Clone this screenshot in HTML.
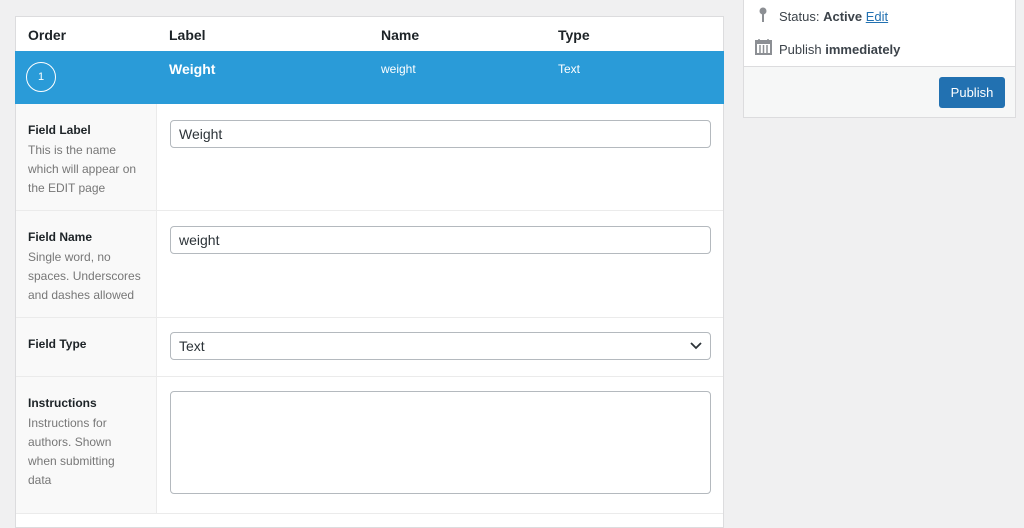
<!DOCTYPE html>
<html><head><style>
body{margin:0;width:1024px;height:515px;background:#f0f0f1;font-family:"Liberation Sans",sans-serif;font-size:13px;color:#1d2327;position:relative;overflow:hidden}
.box{position:absolute;left:15px;top:16px;width:707px;height:510px;background:#fff;border:1px solid #dcdcde}
.hd{position:absolute;top:0;left:0;right:0;height:35px;font-weight:bold;font-size:14px}
.hd span,.blue span{position:absolute}
.blue{position:absolute;top:34px;left:-1px;right:-1px;height:53px;background:#2a9bd8;color:#fff}
.circ{position:absolute;left:11px;top:11px;width:28px;height:28px;border:1.5px solid #fff;border-radius:50%;text-align:center;line-height:28px;font-size:11px}
.row{position:absolute;left:0;right:0;border-bottom:1px solid #ebebeb}
.lab{position:absolute;left:0;top:0;bottom:0;width:141px;background:#f9f9f9;border-right:1px solid #ebebeb;padding:17px 0 0 12px;box-sizing:border-box;font-size:12px;color:#777;line-height:19px;white-space:nowrap}
.lab b{color:#1d2327;display:block;margin-bottom:1px}
.inp{position:absolute;left:154px;width:541px;height:28px;border:1px solid #b4b9be;border-radius:4px;box-sizing:border-box;padding-left:8px;line-height:26px;font-size:14px;color:#2c3338}
.side{position:absolute;left:743px;top:-1px;width:271px;height:117px;background:#fff;border:1px solid #dcdcde}
.ft{position:absolute;left:0;right:0;top:66px;bottom:0;background:#f6f7f7;border-top:1px solid #dcdcde}
.btn{position:absolute;left:195px;top:10px;width:66px;height:31px;background:#2271b1;border-radius:3px;color:#fff;text-align:center;line-height:31px;font-size:13px}
</style></head><body>
<div class="box">
<div class="hd"><span style="left:12px;top:10px">Order</span><span style="left:153px;top:10px">Label</span><span style="left:365px;top:10px">Name</span><span style="left:542px;top:10px">Type</span></div>
<div class="blue"><div class="circ">1</div><span style="left:154px;top:10px;font-weight:bold;font-size:14px">Weight</span><span style="left:366px;top:11px;font-size:12px">weight</span><span style="left:543px;top:11px;font-size:12px">Text</span></div>
<div class="row" style="top:87px;height:106px"><div class="lab"><b>Field Label</b>This is the name<br>which will appear on<br>the EDIT page</div><div class="inp" style="top:16px">Weight</div></div>
<div class="row" style="top:194px;height:106px"><div class="lab"><b>Field Name</b>Single word, no<br>spaces. Underscores<br>and dashes allowed</div><div class="inp" style="top:15px">weight</div></div>
<div class="row" style="top:301px;height:58px"><div class="lab"><b>Field Type</b></div><div class="inp" style="top:14px">Text<svg style="position:absolute;right:8px;top:9px" width="12" height="8" viewBox="0 0 12 8"><path d="M1 1l5 5 5-5" fill="none" stroke="#2c3338" stroke-width="1.8"/></svg></div></div>
<div class="row" style="top:360px;height:136px"><div class="lab"><b>Instructions</b>Instructions for<br>authors. Shown<br>when submitting<br>data</div><div class="inp" style="top:14px;height:103px"></div></div>
</div>
<div class="side">
<svg style="position:absolute;left:14px;top:7px" width="10" height="16" viewBox="0 0 10 16"><circle cx="5" cy="4" r="3.5" fill="#8c8f94"/><rect x="4" y="6" width="2" height="9" fill="#8c8f94"/></svg>
<div style="position:absolute;left:35px;top:9px;color:#3c434a">Status: <b>Active</b> <span style="color:#2271b1;text-decoration:underline">Edit</span></div>
<svg style="position:absolute;left:11px;top:38px" width="17" height="17" viewBox="0 0 17 17"><rect x="1" y="3" width="15" height="13" fill="none" stroke="#8c8f94" stroke-width="2"/><rect x="1" y="3" width="15" height="3" fill="#8c8f94"/><path d="M5 7v8M8.5 7v8M12 7v8M4 1v3M13 1v3" stroke="#8c8f94" stroke-width="1.5"/></svg>
<div style="position:absolute;left:35px;top:42px;color:#3c434a">Publish <b>immediately</b></div>
<div class="ft"><div class="btn">Publish</div></div>
</div>
</body></html>
